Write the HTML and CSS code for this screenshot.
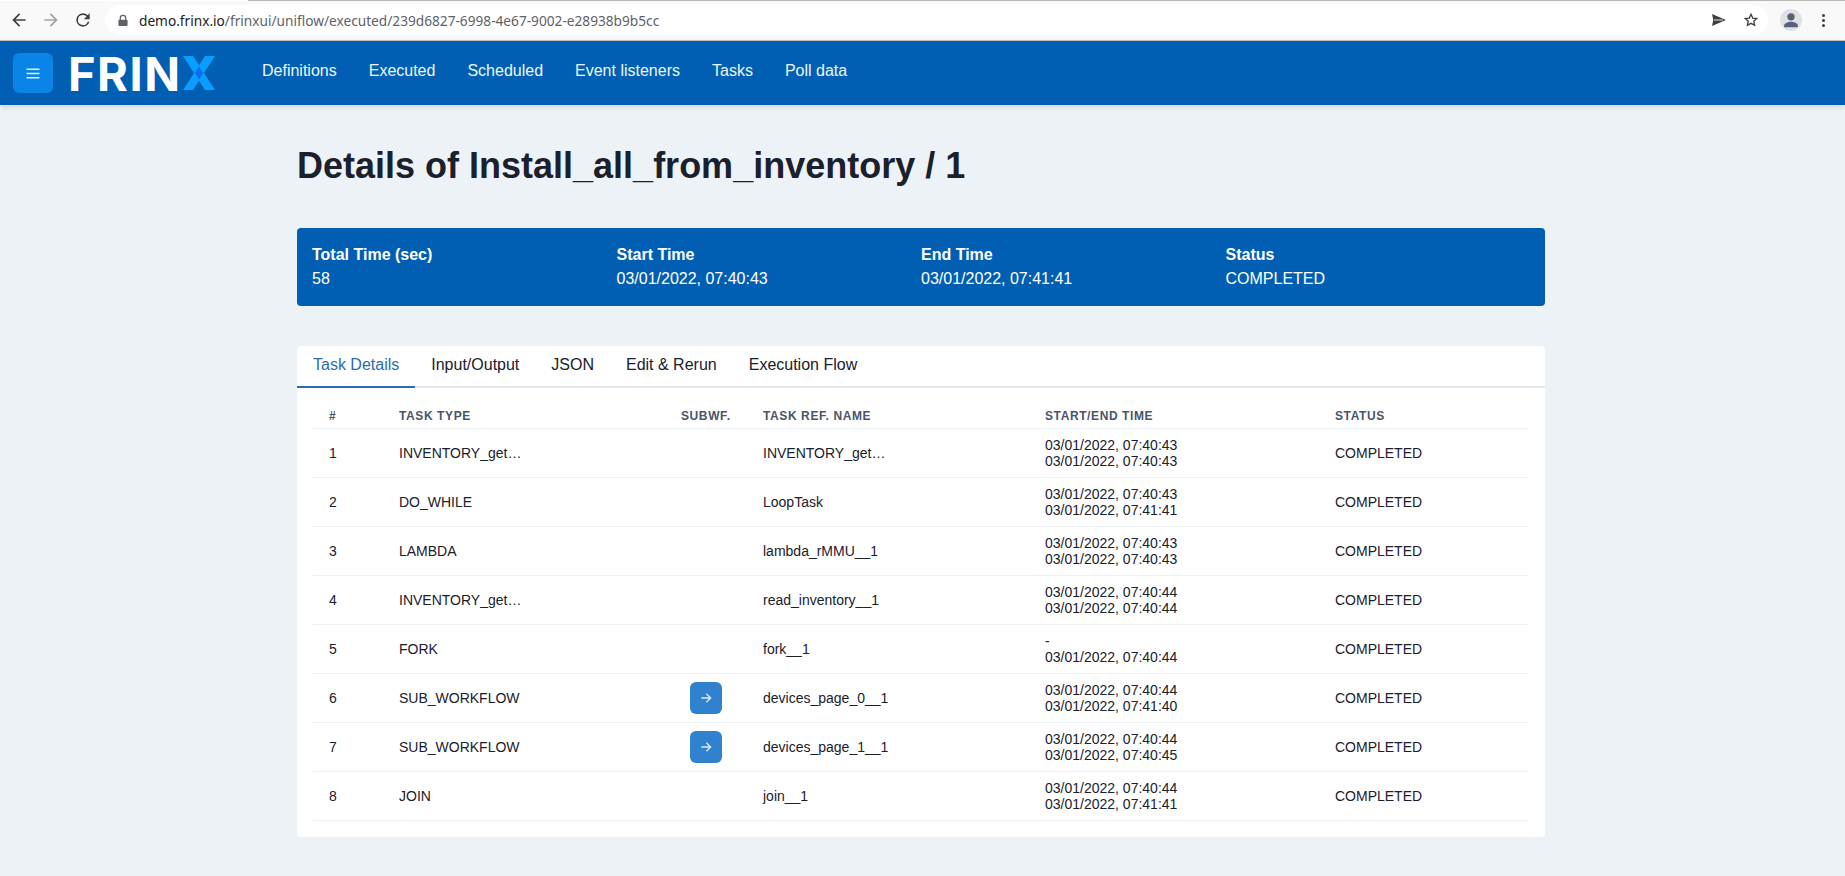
FILE: index.html
```html
<!DOCTYPE html>
<html lang="en">

<head>
  <meta charset="UTF-8">
  <title>Details of Install_all_from_inventory / 1</title>
  <link rel="stylesheet" href="styles.css">
</head>

<body>
  <div class="chrome">
    <div class="chrome-nav">
      <svg class="chrome-icon" viewBox="0 0 24 24"><path d="M20 11H7.800l5.600-5.600L12 4l-8 8 8 8 1.400-1.400L7.800 13H20z" fill="#3c4043"/></svg>
      <svg class="chrome-icon" viewBox="0 0 24 24"><path d="M4 11h12.200l-5.600-5.600L12 4l8 8-8 8-1.400-1.400 5.600-5.600H4z" fill="#a0a3a8"/></svg>
      <svg class="chrome-icon" viewBox="0 0 24 24"><path d="M17.650 6.350A7.950 7.950 0 0 0 12 4a8 8 0 1 0 7.730 10h-2.080A6 6 0 1 1 12 6c1.660 0 3.140.690 4.220 1.780L13 11h7V4z" fill="#3c4043"/></svg>
    </div>
    <div class="omnibox">
      <svg class="lock" viewBox="0 0 12 14"><path d="M2 6V4.200a4 4 0 0 1 8 0V6h.500a1 1 0 0 1 1 1v5.500a1 1 0 0 1-1 1h-9a1 1 0 0 1-1-1V7a1 1 0 0 1 1-1zm1.500 0h5V4.200a2.500 2.500 0 0 0-5 0z" fill="#5f6368"/></svg>
      <span class="url"><b>demo.frinx.io</b>/frinxui/uniflow/executed/239d6827-6998-4e67-9002-e28938b9b5cc</span>
      <svg class="share" viewBox="0 0 14 12"><path d="M0 0l14 6-14 6 1.300-6z" fill="#3c4043"/><path d="M2 6h9" stroke="#c9cbce" stroke-width="1.200"/></svg>
      <svg class="star" viewBox="0 0 24 24"><path d="M12 3.500l2.600 5.600 6.100.700-4.500 4.200 1.200 6L12 17l-5.400 3 1.200-6-4.500-4.200 6.100-.700z" fill="none" stroke="#3c4043" stroke-width="2"/></svg>
    </div>
    <div class="avatar">
      <svg viewBox="0 0 24 24"><circle cx="12" cy="8.500" r="4" fill="#55627a"/><path d="M4.500 20v-2c0-2.500 5-4 7.500-4s7.500 1.500 7.500 4v2z" fill="#55627a"/></svg>
    </div>
    <div class="dots"><i></i><i></i><i></i></div>
  </div>

  <nav class="navbar">
    <button class="menu-btn">
      <svg viewBox="0 0 14 11"><path d="M.500 1.200h13M.500 5.500h13M.500 9.800h13" stroke="#dff1ff" stroke-width="1.500" fill="none"/></svg>
    </button>
    <span class="logo">FRIN<svg class="logo-x" viewBox="0 0 32 34"><path d="M0 0h10l22 34H22zM22 0h10L10 34H0z" fill="#0a9dff"/><path d="M12 17l4-6.500 4 6.500-4 6.500z" fill="#0a6fe8"/></svg></span>
    <div class="nav-links">
      <a>Definitions</a>
      <a>Executed</a>
      <a>Scheduled</a>
      <a>Event listeners</a>
      <a>Tasks</a>
      <a>Poll data</a>
    </div>
  </nav>

  <main class="content">
    <h1>Details of Install_all_from_inventory / 1</h1>

    <section class="summary">
      <div><strong>Total Time (sec)</strong><span>58</span></div>
      <div><strong>Start Time</strong><span>03/01/2022, 07:40:43</span></div>
      <div><strong>End Time</strong><span>03/01/2022, 07:41:41</span></div>
      <div><strong>Status</strong><span>COMPLETED</span></div>
    </section>

    <section class="card">
      <div class="tabs">
        <a class="active">Task Details</a>
        <a>Input/Output</a>
        <a>JSON</a>
        <a>Edit &amp; Rerun</a>
        <a>Execution Flow</a>
      </div>
      <table class="tasks">
        <thead>
          <tr>
            <th class="col-num">#</th>
            <th class="col-type">Task Type</th>
            <th class="col-sub">Subwf.</th>
            <th class="col-ref">Task Ref. Name</th>
            <th class="col-time">Start/End Time</th>
            <th>Status</th>
          </tr>
        </thead>
        <tbody>
          <tr><td>1</td><td>INVENTORY_get…</td><td></td><td>INVENTORY_get…</td><td>03/01/2022, 07:40:43<br>03/01/2022, 07:40:43</td><td>COMPLETED</td></tr>
          <tr><td>2</td><td>DO_WHILE</td><td></td><td>LoopTask</td><td>03/01/2022, 07:40:43<br>03/01/2022, 07:41:41</td><td>COMPLETED</td></tr>
          <tr><td>3</td><td>LAMBDA</td><td></td><td>lambda_rMMU__1</td><td>03/01/2022, 07:40:43<br>03/01/2022, 07:40:43</td><td>COMPLETED</td></tr>
          <tr><td>4</td><td>INVENTORY_get…</td><td></td><td>read_inventory__1</td><td>03/01/2022, 07:40:44<br>03/01/2022, 07:40:44</td><td>COMPLETED</td></tr>
          <tr><td>5</td><td>FORK</td><td></td><td>fork__1</td><td>-<br>03/01/2022, 07:40:44</td><td>COMPLETED</td></tr>
          <tr><td>6</td><td>SUB_WORKFLOW</td><td><button class="go-btn"><svg viewBox="0 0 24 24"><path d="M5 12h14M12.500 5.500L19 12l-6.500 6.500" stroke="#dcebf8" stroke-width="2" fill="none"/></svg></button></td><td>devices_page_0__1</td><td>03/01/2022, 07:40:44<br>03/01/2022, 07:41:40</td><td>COMPLETED</td></tr>
          <tr><td>7</td><td>SUB_WORKFLOW</td><td><button class="go-btn"><svg viewBox="0 0 24 24"><path d="M5 12h14M12.500 5.500L19 12l-6.500 6.500" stroke="#dcebf8" stroke-width="2" fill="none"/></svg></button></td><td>devices_page_1__1</td><td>03/01/2022, 07:40:44<br>03/01/2022, 07:40:45</td><td>COMPLETED</td></tr>
          <tr><td>8</td><td>JOIN</td><td></td><td>join__1</td><td>03/01/2022, 07:40:44<br>03/01/2022, 07:41:41</td><td>COMPLETED</td></tr>
        </tbody>
      </table>
    </section>
  </main>
</body>

</html>
```

FILE: styles.css
```css
* {
  box-sizing: border-box;
}

html,
body {
  height: 100%;
}

body {
  margin: 0;
  background-color: #edf2f7;
  color: #1a202c;
  font-family: "Liberation Sans", Arial, sans-serif;
  font-size: 16px;
  overflow: hidden;
}

.chrome {
  height: 41px;
  display: flex;
  align-items: center;
  background: linear-gradient(to right, #fff 248px, #b8b8b8 248px) top / 100% 1px no-repeat #f9f9fa;
  border-bottom: 1px solid #c4c6c8;
  padding: 0 0 0 9px;
}

.chrome-nav {
  display: flex;
  gap: 12px;
  margin-right: 12px;
}

.chrome-icon {
  width: 20px;
  height: 20px;
}

.omnibox {
  flex: 1;
  height: 30px;
  display: flex;
  align-items: center;
  background-color: #fff;
  border-radius: 15px;
  padding: 0 9px 0 13px;
}

.lock {
  width: 10px;
  height: 13px;
  margin-right: 11px;
}

.url {
  font-family: "Noto Sans", sans-serif;
  font-size: 13.68px;
  color: #5f6368;
  flex: 1;
}

.url b {
  font-weight: 400;
  color: #202124;
}

.share {
  width: 14px;
  height: 12px;
  margin-right: 17px;
}

.star {
  width: 16px;
  height: 16px;
}

.avatar {
  width: 22px;
  height: 22px;
  border-radius: 50%;
  background-color: #dfe1e5;
  margin: 0 20px 0 12px;
}

.avatar svg {
  display: block;
}

.dots {
  display: flex;
  flex-direction: column;
  gap: 2px;
  margin-right: 20px;
}

.dots i {
  display: block;
  width: 3px;
  height: 3px;
  border-radius: 50%;
  background-color: #3c4043;
}

.navbar {
  height: 64px;
  display: flex;
  align-items: center;
  background-color: #005fb3;
  padding: 0 13px;
  box-shadow: 0 2px 6px rgba(0, 0, 0, 0.12);
}

.menu-btn {
  width: 40px;
  height: 40px;
  background-color: #0a84e6;
  border: none;
  border-radius: 6px;
  padding: 0;
  display: flex;
  align-items: center;
  justify-content: center;
}

.menu-btn svg {
  width: 14px;
  height: 11px;
}

.logo {
  display: flex;
  align-items: center;
  font-family: "Inter", sans-serif;
  font-size: 47px;
  font-weight: 700;
  letter-spacing: 1.5px;
  line-height: 1;
  color: #fff;
  margin-left: 15px;
  width: 147px;
}

.logo-x {
  width: 32px;
  height: 34px;
  margin-left: auto;
}

.nav-links {
  display: flex;
  gap: 32px;
  margin-left: 47px;
  padding-bottom: 4px;
  color: #ebf8ff;
}

.content {
  width: 1248px;
  margin-left: 297px;
  padding-top: 41px;
}

h1 {
  margin: 0;
  font-size: 36px;
  line-height: 40px;
  font-weight: 700;
}

.summary {
  margin-top: 42px;
  display: grid;
  grid-template-columns: repeat(4, 1fr);
  height: 78px;
  align-items: center;
  background-color: #005fb3;
  color: #fff;
  border-radius: 4px;
  padding: 0 15px;
}

.summary strong,
.summary span {
  display: block;
  line-height: 24px;
}

.card {
  margin-top: 40px;
  background-color: #fff;
  border-radius: 4px;
  padding-bottom: 16px;
}

.tabs {
  display: flex;
  border-bottom: 2px solid #e2e8f0;
  height: 42px;
}

.tabs a {
  padding: 0 16px;
  line-height: 38px;
  height: 42px;
  color: #1a202c;
}

.tabs a.active {
  color: #2b6cb0;
  border-bottom: 2px solid #2b6cb0;
}

.tasks {
  width: 1216px;
  margin: 8px 16px 0;
  border-collapse: collapse;
  table-layout: fixed;
  font-size: 14px;
}

.tasks th {
  text-align: left;
  vertical-align: bottom;
  font-size: 12px;
  font-weight: 700;
  letter-spacing: 0.6px;
  text-transform: uppercase;
  color: #4a5568;
  height: 32px;
  padding: 0 16px 5px;
  border-bottom: 1px solid #edf2f7;
}

.tasks td {
  height: 49px;
  padding: 0 16px;
  line-height: 16px;
  border-bottom: 1px solid #edf2f7;
}

.col-num {
  width: 70px;
}

.col-type {
  width: 282px;
}

.col-sub {
  width: 82px;
}

.col-ref {
  width: 282px;
}

.col-time {
  width: 290px;
}

.go-btn {
  width: 32px;
  height: 32px;
  display: block;
  margin-left: 9px;
  background-color: #3182ce;
  border: none;
  border-radius: 6px;
  padding: 0;
}

.go-btn svg {
  display: block;
  width: 16px;
  height: 16px;
  margin: 0 auto;
}
```
